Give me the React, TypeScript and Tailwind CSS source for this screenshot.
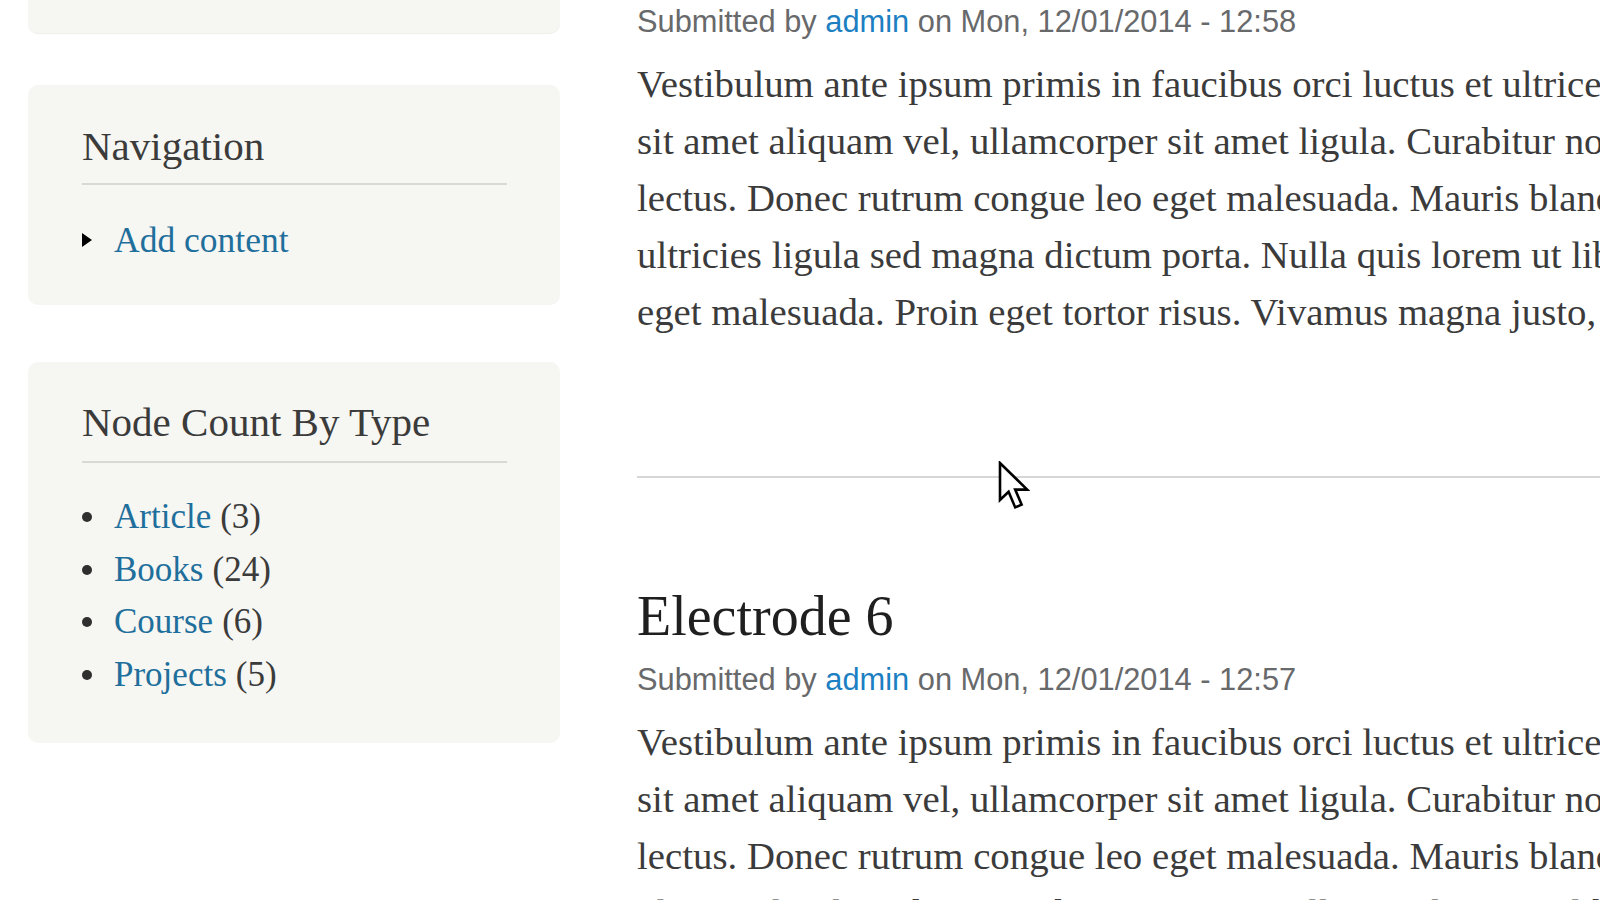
const serif = "font-['Liberation_Serif','Times_New_Roman',serif]"
const sans = "font-['Liberation_Sans',Arial,sans-serif]"

const post1 = [
    "Vestibulum ante ipsum primis in faucibus orci luctus et ultrices posuere cubilia Curae; Donec velit neque, auctor",
    "sit amet aliquam vel, ullamcorper sit amet ligula. Curabitur non nulla sit amet nisl tempus convallis quis ac",
    "lectus. Donec rutrum congue leo eget malesuada. Mauris blandit aliquet elit, eget tincidunt nibh pulvinar a.",
    "ultricies ligula sed magna dictum porta. Nulla quis lorem ut libero malesuada feugiat. Donec rutrum congue leo",
    "eget malesuada. Proin eget tortor risus. Vivamus magna justo, lacinia eget consectetur sed, convallis at tellus.",
]

const counts = [
    { name: "Article", n: 3 },
    { name: "Books", n: 24 },
    { name: "Course", n: 6 },
    { name: "Projects", n: 5 },
]

const Meta: React.FC<{ time: string }> = ({ time }) => (
    <p className={`${sans} text-[30.8px] leading-[36px] text-[#68696b] whitespace-nowrap`}>
        Submitted by <a className="text-[#1c7fc2]">admin</a> on Mon, 12/01/2014 - {time}
    </p>
)

const Body: React.FC<{ lines: string[] }> = ({ lines }) => (
    <div className={`${serif} text-[38.8px] leading-[57px] text-[#3b3b3b] mt-[15px]`}>
        {lines.map(line => (
            <p key={line} className="whitespace-nowrap">{line}</p>
        ))}
    </div>
)

const Cursor = () => (
    <svg className="absolute left-[998px] top-[461px]" width="34" height="51" viewBox="0 0 17 25.5">
        <path d="M1 1 L1 19.5 L5.3 15.4 L8.6 23.2 L11.8 21.8 L8.6 14.3 L14.6 14.3 Z" fill="#fff" stroke="#000" strokeWidth="1.3" strokeLinejoin="miter" />
    </svg>
)

export default function App() {
    return (
        <div className="relative w-[1600px] h-[900px] overflow-hidden bg-white">
            <div className="flex gap-[77px]">
                <aside className="w-[532px] ml-[28px] shrink-0">
                    <div className="h-[34px] bg-[#f6f6f2] rounded-b-[10px] border-b border-[#efefea]" />

                    <section className="mt-[51px] bg-[#f6f6f2] rounded-[10px] pl-[54px] pr-[53px] pt-[37px] pb-[39px]">
                        <h2 className={`${serif} text-[41px] leading-[49px] text-[#3b3b3b] pb-[12px] border-b-2 border-[#d8d8d4]`}>Navigation</h2>
                        <ul className="mt-[29px]">
                            <li className={`${serif} text-[35.5px] leading-[52px] flex items-center`}>
                                <span className="w-0 h-0 border-y-[7px] border-y-transparent border-l-[10px] border-l-black mr-[22px]" />
                                <a className="text-[#1f6f9c]">Add content</a>
                            </li>
                        </ul>
                    </section>

                    <section className="mt-[57px] bg-[#f6f6f2] rounded-[10px] pl-[54px] pr-[53px] pt-[36px] pb-[42px]">
                        <h2 className={`${serif} text-[41px] leading-[49px] text-[#3b3b3b] pb-[14px] border-b-2 border-[#d8d8d4]`}>Node Count By Type</h2>
                        <ul className="mt-[28px]">
                            {counts.map(c => (
                                <li key={c.name} className={`${serif} text-[35px] leading-[52.5px] flex items-center text-[#3b3b3b]`}>
                                    <span className="w-[10px] h-[10px] rounded-full bg-[#2f2f2f] mr-[22px]" />
                                    <a className="text-[#1f6f9c]">{c.name}</a>
                                    <span className="ml-[9px]">({c.n})</span>
                                </li>
                            ))}
                        </ul>
                    </section>
                </aside>

                <main className="flex-1 min-w-0 pt-[4px]">
                    <article>
                        <Meta time="12:58" />
                        <Body lines={post1} />
                    </article>
                    <hr className="mt-[136px] border-0 h-[2px] bg-[#d6d6d6]" />
                    <article className="mt-[105px]">
                        <h2 className={`${serif} text-[56px] leading-[67px] text-[#1f1f1f] mb-[12px]`}>Electrode 6</h2>
                        <Meta time="12:57" />
                        <Body lines={post1.slice(0, 4)} />
                    </article>
                </main>
            </div>
            <Cursor />
        </div>
    )
}
